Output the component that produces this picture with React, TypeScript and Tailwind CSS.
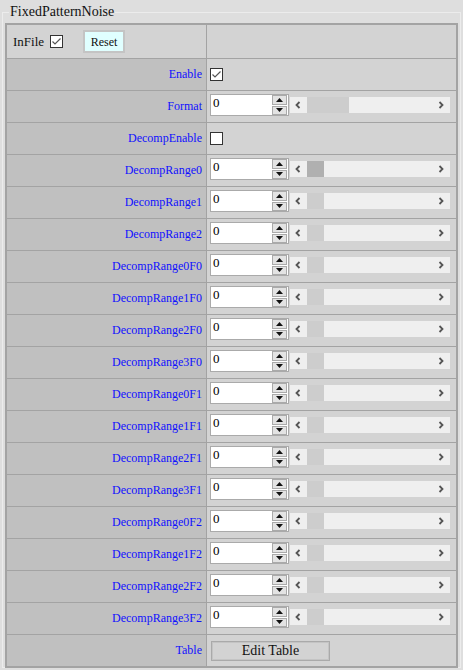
import React from "react";

const rows = [
  "DecompRange0",
  "DecompRange1",
  "DecompRange2",
  "DecompRange0F0",
  "DecompRange1F0",
  "DecompRange2F0",
  "DecompRange3F0",
  "DecompRange0F1",
  "DecompRange1F1",
  "DecompRange2F1",
  "DecompRange3F1",
  "DecompRange0F2",
  "DecompRange1F2",
  "DecompRange2F2",
  "DecompRange3F2",
];

function Check({ checked }: { checked?: boolean }) {
  return (
    <span className="inline-flex w-[13px] h-[13px] border border-[#333] bg-white items-center justify-center">
      {checked && (
        <svg width="11" height="11" viewBox="0 0 11 11">
          <path d="M1.5 5.5 L4 8 L9.5 2.5" fill="none" stroke="#555" strokeWidth="1.2" />
        </svg>
      )}
    </span>
  );
}

function Spinner() {
  return (
    <div className="flex flex-col w-[15px] h-[20px] gap-[1px] mr-[1px]">
      <div className="flex-1 bg-[#e3e3e3] border border-[#aaa] flex items-center justify-center">
        <svg width="7" height="4" viewBox="0 0 7 4"><path d="M0 4 L3.5 0 L7 4 Z" fill="#111" /></svg>
      </div>
      <div className="flex-1 bg-[#e3e3e3] border border-[#aaa] flex items-center justify-center">
        <svg width="7" height="4" viewBox="0 0 7 4"><path d="M0 0 L3.5 4 L7 0 Z" fill="#111" /></svg>
      </div>
    </div>
  );
}

function Slider({ thumb = "w-[17px] bg-[#cdcdcd]" }: { thumb?: string }) {
  return (
    <div className="w-[160px] h-[16px] bg-[#efefef] flex items-center">
      <svg className="ml-[4px]" width="8" height="8" viewBox="0 0 8 8">
        <path d="M5.5 1 L2.5 4 L5.5 7" fill="none" stroke="#555" strokeWidth="1.8" />
      </svg>
      <div className={`ml-[5px] h-[16px] ${thumb}`} />
      <div className="flex-1" />
      <svg className="mr-[5px]" width="8" height="8" viewBox="0 0 8 8">
        <path d="M2.5 1 L5.5 4 L2.5 7" fill="none" stroke="#555" strokeWidth="1.8" />
      </svg>
    </div>
  );
}

function NumRow({ thumb }: { thumb?: string }) {
  return (
    <div className="flex items-start pt-[3px] pl-[3px]">
      <div className="w-[79px] h-[22px] bg-white border border-[#aaa] flex justify-between items-center">
        <span className="self-start pl-[2px] text-[13px] leading-[16px] text-black">0</span>
        <Spinner />
      </div>
      <div className="mt-[3px] ml-[1px]">
        <Slider thumb={thumb} />
      </div>
    </div>
  );
}

function Row({ label, children }: { label: string; children: React.ReactNode }) {
  return (
    <div className="flex h-[32px] border-t border-[#a3a3a3]">
      <div className="w-[200px] bg-[#c0c0c0] border-r border-[#a3a3a3] flex items-center justify-end pr-[4px] pb-[2px] text-[12px] text-[#1010ff]">
        {label}
      </div>
      <div className="flex-1 bg-[#d3d3d3]">{children}</div>
    </div>
  );
}

export default function App() {
  return (
    <div
      className="w-[463px] h-[670px] bg-[#dedede] pt-[12px] px-[2px]"
      style={{ fontFamily: '"Liberation Serif", "Times New Roman", serif' }}
    >
      <div className="relative border border-[#ececec] h-[656px] pt-[10px] px-[2px]">
        <div className="absolute -top-[9px] left-[6px] px-[1px] bg-[#dedede] text-[14px] leading-[16px] text-[#111]">
          FixedPatternNoise
        </div>
        <div className="border-2 border-[#a3a3a3] bg-[#d3d3d3]">
          <div className="flex h-[33px]">
            <div className="w-[200px] border-r border-[#a3a3a3] flex items-center pl-[6px] text-[13px] text-[#111]">
              <span className="mr-[6px]">InFile</span>
              <Check checked />
              <button className="ml-[20px] h-[23px] w-[42px] bg-[#e0ffff] border-2 border-[#c4c4c4] text-[12px] text-[#111]">
                Reset
              </button>
            </div>
            <div className="flex-1" />
          </div>
          <Row label="Enable">
            <div className="h-full flex items-center pl-[3px]">
              <Check checked />
            </div>
          </Row>
          <Row label="Format">
            <NumRow thumb="w-[42px] bg-[#cdcdcd]" />
          </Row>
          <Row label="DecompEnable">
            <div className="h-full flex items-center pl-[3px]">
              <Check />
            </div>
          </Row>
          {rows.map((r, i) => (
            <Row key={r} label={r}>
              <NumRow thumb={i === 0 ? "w-[17px] bg-[#b0b0b0]" : "w-[17px] bg-[#cdcdcd]"} />
            </Row>
          ))}
          <Row label="Table">
            <div className="h-full flex items-center pl-[4px]">
              <button className="w-[119px] h-[20px] bg-[#d3d3d3] border-2 border-[#c4c4c4] outline outline-1 outline-[#aaa] -outline-offset-1 text-[14px] leading-[14px] text-[#111]">
                Edit Table
              </button>
            </div>
          </Row>
        </div>
      </div>
    </div>
  );
}
